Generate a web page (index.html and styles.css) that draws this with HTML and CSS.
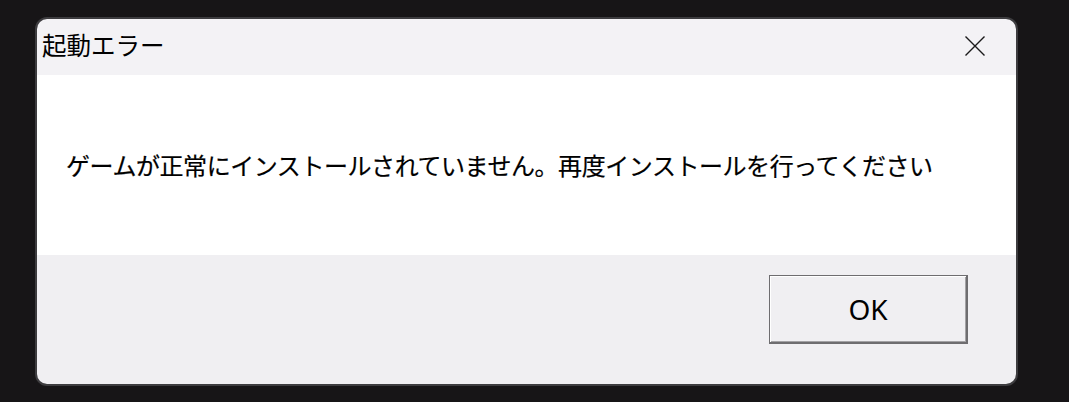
FILE: index.html
```html
<!DOCTYPE html>
<html lang="ja">
<head>
<meta charset="utf-8">
<title>起動エラー</title>
<link rel="stylesheet" href="styles.css">
</head>
<body>
<div class="window">
  <div class="titlebar">
    <span class="title">起動エラー</span>
    <span class="close" aria-label="閉じる">
      <svg width="20" height="20" viewBox="0 0 20 20"><path d="M0.5 0.5 L19.5 19.5 M19.5 0.5 L0.5 19.5" stroke="#1a1a1a" stroke-width="1.4" fill="none"/></svg>
    </span>
  </div>
  <div class="content">
    <p class="message">ゲームが正常にインストールされていません。再度インストールを行ってください</p>
  </div>
  <div class="footer">
    <button class="ok">OK</button>
  </div>
</div>
</body>
</html>
```

FILE: styles.css
```css
html, body {
  margin: 0;
  padding: 0;
  background: #171517;
  width: 1069px;
  height: 402px;
  overflow: hidden;
}

.window {
  margin: 17px 0 0 35px;
  width: 983px;
  height: 369px;
  box-sizing: border-box;
  border: 2px solid #3d3c3f;
  border-radius: 12px;
  overflow: hidden;
  display: flex;
  flex-direction: column;
  font-family: "Noto Sans CJK JP", "Noto Sans", sans-serif;
  color: #000;
}

.titlebar {
  height: 56px;
  flex: none;
  background: #f3f2f5;
  display: flex;
  align-items: center;
  justify-content: space-between;
  padding: 0 31px 0 5px;
}

.title {
  font-size: 24.5px;
  line-height: 1;
  margin-top: -4px;
}

.close {
  display: flex;
  width: 20px;
  height: 20px;
  margin-top: -3px;
}

.content {
  height: 180px;
  flex: none;
  background: #ffffff;
  display: flex;
  align-items: center;
  padding-left: 29px;
}

.message {
  margin: 0;
  font-size: 24px;
  letter-spacing: -0.44px;
  line-height: 1;
  white-space: nowrap;
  -webkit-text-stroke: 0.2px #000;
}

.footer {
  flex: 1;
  background: #f0eff2;
  display: flex;
  justify-content: flex-end;
  align-items: flex-start;
  padding: 20px 48px 0 0;
}

.ok {
  width: 199px;
  height: 69px;
  box-sizing: border-box;
  background: #f0eff2;
  border: 1px solid #6e6d70;
  border-right-width: 2px;
  border-bottom-width: 2px;
  box-shadow: inset 1px 1px 0 #ffffff, inset -1px -1px 0 #a3a2a5;
  font-family: "Noto Sans", "Open Sans", sans-serif;
  font-size: 28px;
  color: #000;
  padding: 0;
  margin: 0;
}
```
